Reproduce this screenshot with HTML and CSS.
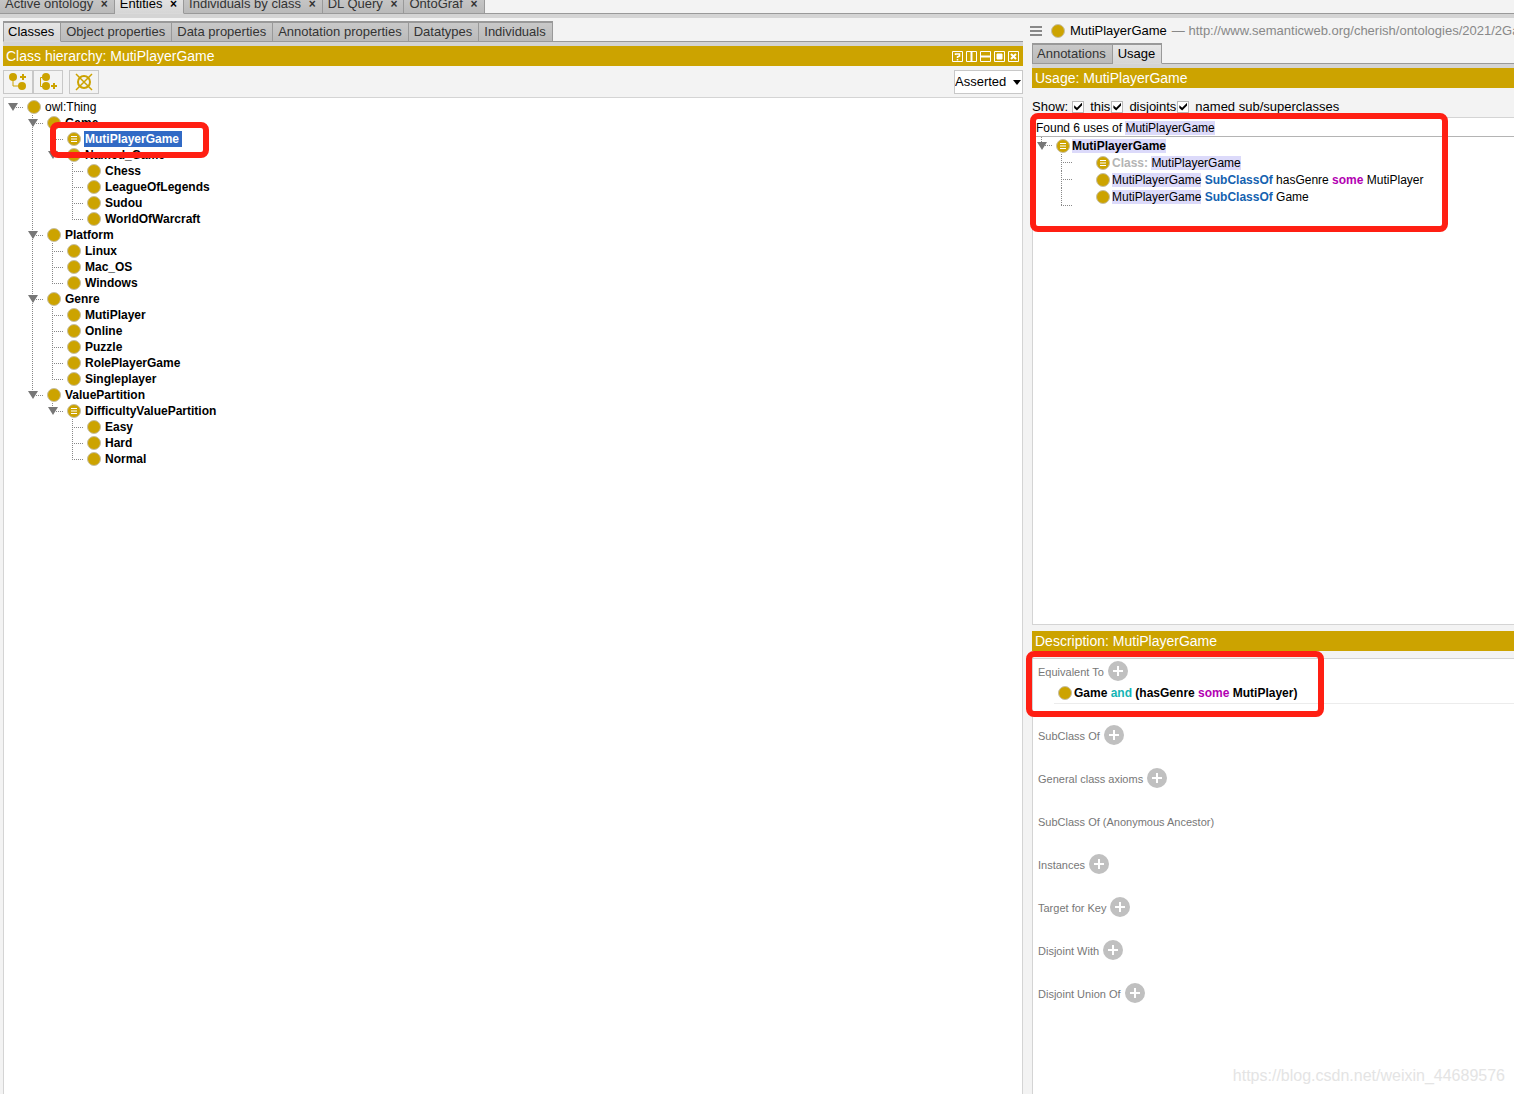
FILE: index.html
```
<!DOCTYPE html>
<html lang="en">
<head>
<meta charset="utf-8">
<title>MutiPlayerGame - Entities</title>
<meta name="viewport" content="width=device-width, initial-scale=1">
<link rel="stylesheet" href="styles.css">
</head>
<body>
<svg class="sprite" aria-hidden="true">
  <symbol id="class" viewBox="0 0 14 14"><circle cx="7" cy="7" r="6.5" fill="#cca300" stroke="#c6bea4"/></symbol>
  <symbol id="defined" viewBox="0 0 14 14"><circle cx="7" cy="7" r="6.5" fill="#cca300" stroke="#c6bea4"/><path d="M4 4.5h6M4 7h6M4 9.5h6" stroke="#fff"/></symbol>
  <symbol id="arrow" viewBox="0 0 10 8"><path d="M0 0h10L5 8z" fill="#777"/></symbol>
  <symbol id="plus" viewBox="0 0 20 20"><circle cx="10" cy="10" r="10" fill="#c0c0c0"/><path d="M10 5v10M5 10h10" stroke="#fff" stroke-width="2"/></symbol>
</svg>

<nav class="tabs main-tabs">
  <button class="tab">Active ontology <span class="close">×</span></button>
  <button class="tab selected">Entities <span class="close">×</span></button>
  <button class="tab">Individuals by class <span class="close">×</span></button>
  <button class="tab">DL Query <span class="close">×</span></button>
  <button class="tab">OntoGraf <span class="close">×</span></button>
</nav>

<main class="workspace">
  <section class="hierarchy">
    <nav class="tabs sub-tabs">
      <button class="tab selected">Classes</button>
      <button class="tab">Object properties</button>
      <button class="tab">Data properties</button>
      <button class="tab">Annotation properties</button>
      <button class="tab">Datatypes</button>
      <button class="tab">Individuals</button>
    </nav>
    <header class="view-title">
      <h2>Class hierarchy: MutiPlayerGame</h2>
      <div class="view-actions">
        <button aria-label="Help"><svg viewBox="0 0 11 11"><path d="M.5.5h10v10H.5z"/><path d="M3.5 4V3h4v2L5.500 6v1M5.500 8v1.500" stroke-width="1.500"/></svg></button>
        <button aria-label="Split vertically"><svg viewBox="0 0 11 11"><path d="M.5.5h10v10H.5z"/><path d="M5.500 0v11" stroke-width="2"/></svg></button>
        <button aria-label="Split horizontally"><svg viewBox="0 0 11 11"><path d="M.5.5h10v10H.5z"/><path d="M0 5.500h11" stroke-width="2"/></svg></button>
        <button aria-label="Float"><svg viewBox="0 0 11 11"><path d="M.5.5h10v10H.5z"/><path d="M3 3h5v5H3z" fill="#fff"/></svg></button>
        <button aria-label="Close"><svg viewBox="0 0 11 11"><path d="M.5.5h10v10H.5z"/><path d="M3 3l5 5M8 3l-5 5" stroke-width="2"/></svg></button>
      </div>
    </header>
    <div class="toolbar">
      <button class="tool" aria-label="Add subclass"><svg viewBox="0 0 20 20"><path d="M5 5v9h9" fill="none" stroke="#cca300"/><circle cx="5" cy="5" r="4" fill="#cca300"/><circle cx="14" cy="14" r="4" fill="#cca300"/><path d="M15 2v6M12 5h6" stroke="#cca300" stroke-width="2"/></svg></button>
      <button class="tool" aria-label="Add sibling class"><svg viewBox="0 0 20 20"><path d="M7 5.500H2.500v9H7" fill="none" stroke="#cca300"/><circle cx="8" cy="5" r="4" fill="#cca300"/><circle cx="8" cy="14" r="4" fill="#cca300"/><path d="M16 11v6M13 14h6" stroke="#cca300" stroke-width="2"/></svg></button>
      <button class="tool separate" aria-label="Delete class"><svg viewBox="0 0 20 20"><circle cx="10" cy="10" r="6" fill="none" stroke="#cca300" stroke-width="2"/><path d="M2 2l16 16M18 2L2 18" stroke="#cca300" stroke-width="1.500"/></svg></button>
      <div class="mode">
        <select aria-label="Hierarchy mode"><option>Asserted</option><option>Inferred</option></select>
        <svg viewBox="0 0 8 5" aria-hidden="true"><path d="M0 0h8L4 5z"/></svg>
      </div>
    </div>
    <div class="tree-view">
      <ul class="tree">
        <li><div class="row"><button class="toggle" aria-label="Collapse"><svg><use href="#arrow"/></svg></button><svg class="dot"><use href="#class"/></svg><span class="plain">owl:Thing</span></div>
          <ul>
            <li><div class="row"><button class="toggle" aria-label="Collapse"><svg><use href="#arrow"/></svg></button><svg class="dot"><use href="#class"/></svg><span>Game</span></div>
              <ul>
                <li class="marked"><div class="row"><i class="toggle"></i><svg class="dot"><use href="#defined"/></svg><span class="current">MutiPlayerGame</span></div><div class="callout"></div></li>
                <li><div class="row"><button class="toggle" aria-label="Collapse"><svg><use href="#arrow"/></svg></button><svg class="dot"><use href="#class"/></svg><span>Named_Game</span></div>
                  <ul>
                    <li><div class="row"><i class="toggle"></i><svg class="dot"><use href="#class"/></svg><span>Chess</span></div></li>
                    <li><div class="row"><i class="toggle"></i><svg class="dot"><use href="#class"/></svg><span>LeagueOfLegends</span></div></li>
                    <li><div class="row"><i class="toggle"></i><svg class="dot"><use href="#class"/></svg><span>Sudou</span></div></li>
                    <li><div class="row"><i class="toggle"></i><svg class="dot"><use href="#class"/></svg><span>WorldOfWarcraft</span></div></li>
                  </ul>
                </li>
              </ul>
            </li>
            <li><div class="row"><button class="toggle" aria-label="Collapse"><svg><use href="#arrow"/></svg></button><svg class="dot"><use href="#class"/></svg><span>Platform</span></div>
              <ul>
                <li><div class="row"><i class="toggle"></i><svg class="dot"><use href="#class"/></svg><span>Linux</span></div></li>
                <li><div class="row"><i class="toggle"></i><svg class="dot"><use href="#class"/></svg><span>Mac_OS</span></div></li>
                <li><div class="row"><i class="toggle"></i><svg class="dot"><use href="#class"/></svg><span>Windows</span></div></li>
              </ul>
            </li>
            <li><div class="row"><button class="toggle" aria-label="Collapse"><svg><use href="#arrow"/></svg></button><svg class="dot"><use href="#class"/></svg><span>Genre</span></div>
              <ul>
                <li><div class="row"><i class="toggle"></i><svg class="dot"><use href="#class"/></svg><span>MutiPlayer</span></div></li>
                <li><div class="row"><i class="toggle"></i><svg class="dot"><use href="#class"/></svg><span>Online</span></div></li>
                <li><div class="row"><i class="toggle"></i><svg class="dot"><use href="#class"/></svg><span>Puzzle</span></div></li>
                <li><div class="row"><i class="toggle"></i><svg class="dot"><use href="#class"/></svg><span>RolePlayerGame</span></div></li>
                <li><div class="row"><i class="toggle"></i><svg class="dot"><use href="#class"/></svg><span>Singleplayer</span></div></li>
              </ul>
            </li>
            <li><div class="row"><button class="toggle" aria-label="Collapse"><svg><use href="#arrow"/></svg></button><svg class="dot"><use href="#class"/></svg><span>ValuePartition</span></div>
              <ul>
                <li><div class="row"><button class="toggle" aria-label="Collapse"><svg><use href="#arrow"/></svg></button><svg class="dot"><use href="#defined"/></svg><span>DifficultyValuePartition</span></div>
                  <ul>
                    <li><div class="row"><i class="toggle"></i><svg class="dot"><use href="#class"/></svg><span>Easy</span></div></li>
                    <li><div class="row"><i class="toggle"></i><svg class="dot"><use href="#class"/></svg><span>Hard</span></div></li>
                    <li><div class="row"><i class="toggle"></i><svg class="dot"><use href="#class"/></svg><span>Normal</span></div></li>
                  </ul>
                </li>
              </ul>
            </li>
          </ul>
        </li>
      </ul>
    </div>
  </section>

  <section class="entity">
    <header class="entity-head">
      <button class="menu" aria-label="Menu"><svg viewBox="0 0 12 10"><path d="M0 1h12M0 5h12M0 9h12" stroke="#888" stroke-width="2"/></svg></button>
      <svg class="dot"><use href="#class"/></svg>
      <h1>MutiPlayerGame</h1>
      <span class="iri">— http://www.semanticweb.org/cherish/ontologies/2021/2Game#MutiPlayerGame</span>
    </header>

    <div class="usage">
      <nav class="tabs sub-tabs">
        <button class="tab">Annotations</button>
        <button class="tab selected">Usage</button>
      </nav>
      <header class="view-title"><h2>Usage: MutiPlayerGame</h2></header>
      <div class="filters">
        <span>Show:</span>
        <label><input type="checkbox" checked>this</label>
        <label><input type="checkbox" checked>disjoints</label>
        <label><input type="checkbox" checked>named sub/superclasses</label>
      </div>
      <div class="usage-list">
        <p class="found">Found 6 uses of <mark>MutiPlayerGame</mark></p>
        <ul class="tree usage-tree">
          <li><div class="row"><button class="toggle" aria-label="Collapse"><svg><use href="#arrow"/></svg></button><svg class="dot"><use href="#defined"/></svg><b><mark>MutiPlayerGame</mark></b></div>
            <ul>
              <li><div class="row"><svg class="dot"><use href="#defined"/></svg><span><b class="kind">Class:</b> <mark>MutiPlayerGame</mark></span></div></li>
              <li><div class="row"><svg class="dot"><use href="#class"/></svg><span><mark>MutiPlayerGame</mark> <b class="axiom">SubClassOf</b> hasGenre <b class="some">some</b> MutiPlayer</span></div></li>
              <li><div class="row"><svg class="dot"><use href="#class"/></svg><span><mark>MutiPlayerGame</mark> <b class="axiom">SubClassOf</b> Game</span></div></li>
            </ul>
          </li>
        </ul>
        <div class="callout"></div>
      </div>
    </div>

    <div class="description">
      <header class="view-title"><h2>Description: MutiPlayerGame</h2></header>
      <div class="sections">
        <div class="section"><h3>Equivalent To</h3><button class="add" aria-label="Add equivalent class"><svg><use href="#plus"/></svg></button></div>
        <div class="expression"><svg class="dot"><use href="#class"/></svg><span>Game <b class="and">and</b> (hasGenre <b class="some">some</b> MutiPlayer)</span></div>
        <div class="section"><h3>SubClass Of</h3><button class="add" aria-label="Add superclass"><svg><use href="#plus"/></svg></button></div>
        <div class="section"><h3>General class axioms</h3><button class="add" aria-label="Add general axiom"><svg><use href="#plus"/></svg></button></div>
        <div class="section"><h3>SubClass Of (Anonymous Ancestor)</h3></div>
        <div class="section"><h3>Instances</h3><button class="add" aria-label="Add instance"><svg><use href="#plus"/></svg></button></div>
        <div class="section"><h3>Target for Key</h3><button class="add" aria-label="Add key"><svg><use href="#plus"/></svg></button></div>
        <div class="section"><h3>Disjoint With</h3><button class="add" aria-label="Add disjoint class"><svg><use href="#plus"/></svg></button></div>
        <div class="section"><h3>Disjoint Union Of</h3><button class="add" aria-label="Add disjoint union"><svg><use href="#plus"/></svg></button></div>
        <div class="callout"></div>
      </div>
    </div>
  </section>
</main>
<div class="watermark">https://blog.csdn.net/weixin_44689576</div>
</body>
</html>
```
FILE: styles.css
```
* { box-sizing: border-box; }
body {
  margin: 0;
  height: 100vh;
  display: flex;
  flex-direction: column;
  overflow: hidden;
  background: #f3f3f3;
  color: #000;
  font: 12px/16px "Liberation Sans", Arial, sans-serif;
}
button { margin: 0; padding: 0; border: 0; background: none; font: inherit; color: inherit; }
h1, h2, h3, p, ul { margin: 0; padding: 0; font-size: inherit; font-weight: normal; }
ul { list-style: none; }
svg { display: block; }
mark { background: #dcdafa; color: inherit; }
.sprite { display: none; }
.dot { width: 14px; height: 14px; flex: none; }

/* Tabs */
.tabs { display: flex; flex: none; height: 25px; border-bottom: 4px solid #d4d4d4; box-shadow: inset 0 -1px #999; }
.tab {
  height: 21px;
  padding: 0 6px 0 5px;
  border: solid #999;
  border-width: 2px 1px 1px;
  border-left-width: 0;
  background: linear-gradient(#c9c9c9, #bababa);
  color: #333;
  font-size: 13px;
  line-height: 18px;
  white-space: nowrap;
}
.tab.selected { border-bottom-color: #d9d9d9; background: linear-gradient(#e6e6e6, #d6d6d6); color: #000; }
.sub-tabs .tab:first-child { border-left-width: 1px; padding-left: 4px; }
.main-tabs { height: 18px; align-items: flex-end; }
.close { padding-left: 4px; font-weight: bold; font-size: 12px; }

/* Two columns */
.workspace { flex: 1; min-height: 0; display: grid; grid-template-columns: minmax(0, 1fr) 482px; gap: 9px; padding-left: 3px; }
.hierarchy { display: flex; flex-direction: column; min-height: 0; padding-top: 3px; }
.view-title {
  display: flex;
  flex: none;
  align-items: center;
  justify-content: space-between;
  height: 20px;
  padding: 0 4px 0 3px;
  background: #cca300;
  color: #fff;
  font-size: 14px;
}
.view-actions { display: flex; gap: 3px; }
.view-actions svg { width: 11px; height: 11px; fill: none; stroke: #fff; }

.toolbar { display: flex; flex: none; padding: 4px 0 3px; }
.tool { display: grid; place-items: center; width: 30px; height: 24px; border: 1px solid #c8c8c8; }
.tool svg { width: 20px; height: 20px; }
.separate { margin-left: 6px; }
.mode { display: grid; align-items: center; width: 69px; margin-left: auto; }
.mode > * { grid-area: 1 / 1; }
.mode select { width: 100%; height: 24px; margin: 0; padding: 0; border: 1px solid #c8c8c8; border-radius: 0; background: #fff; color: #000; font: inherit; font-size: 13px; appearance: none; }
.mode svg { width: 8px; height: 5px; margin-right: 2px; justify-self: end; pointer-events: none; }

/* Trees, with dotted connectors */
.tree-view { flex: 1; min-height: 0; padding: 1px 4px; border: 1px solid #d4d4d4; border-bottom: 0; background: #fff; }
.tree ul { margin-left: 20px; }
.tree li {
  background-image:
    repeating-linear-gradient(to bottom, #888 0 1px, transparent 1px 2px),
    repeating-linear-gradient(to right, #888 0 1px, transparent 1px 2px);
  background-position: 4px 0, 4px 8px;
  background-size: 1px 100%, 12px 1px;
  background-repeat: no-repeat;
}
.tree li:last-child { background-size: 1px 8px, 12px 1px; }
.tree-view > .tree > li { background-size: 0 0, 12px 1px; }
.row { display: flex; align-items: center; height: 16px; white-space: nowrap; font-weight: bold; }
.row .dot { margin: 0 3px 0 9px; }
.row span { padding: 1px 0 0 1px; line-height: 15px; }
.row .plain { font-weight: normal; }
.row .current { padding-right: 3px; background: #316ac5; color: #fff; }
.toggle { width: 10px; height: 8px; }
.toggle svg { width: 10px; height: 8px; }

.callout { position: absolute; border: 6px solid #ff1f13; border-radius: 8px; pointer-events: none; z-index: 1; }
.marked { position: relative; }
.marked .callout { top: -9px; left: 2px; width: 159px; height: 36px; }

/* Entity column */
.entity { display: grid; grid-template-rows: 25px minmax(0, 582fr) minmax(0, 469fr); min-height: 0; min-width: 0; }
.entity-head { display: flex; align-items: center; gap: 5px; margin-left: -2px; font-size: 13px; white-space: nowrap; overflow: hidden; }
.entity-head .dot { margin-left: 4px; }
.menu svg { width: 12px; height: 10px; }
.iri { color: #888; }
.usage, .description { display: flex; flex-direction: column; min-height: 0; }
.description { padding-top: 6px; }

.filters { display: flex; flex: none; align-items: center; gap: 1px; height: 29px; padding-top: 8px; font-size: 13px; white-space: nowrap; }
.filters span { margin-right: 3px; }
.filters label { display: flex; align-items: center; gap: 6px; }
.filters input { display: grid; place-items: center; width: 12px; height: 12px; margin: 0; border: 1px solid #b8b8b8; background: #fff; appearance: none; }
.filters input:checked::before { content: ""; width: 8px; height: 8px; background: #000; clip-path: polygon(0 35%, 35% 65%, 100% 0, 100% 35%, 35% 100%, 0 70%); }

.usage-list { position: relative; flex: 1; border: 1px solid #d4d4d4; border-right: 0; background: #fff; }
.found { height: 19px; padding: 3px 3px 0; line-height: 15px; border-bottom: 1px solid #b4b4b4; }
.usage-tree { padding-left: 4px; }
.usage-tree .row { height: 17px; font-weight: normal; }
.usage-tree .row .dot { margin-right: 2px; }
.usage-tree .row span { padding-left: 0; }
.usage-tree ul .dot { margin-left: 39px; }
.usage-tree ul li:last-child { height: 34px; background-position: 4px 0, 4px 17px; background-size: 1px 17px, 12px 1px; }
.usage-list .callout { top: -5px; left: -3px; width: 418px; height: 119px; }
.kind { color: #b4b4b4; }
.axiom { color: #1462b0; }
.some { color: #b200b2; }
.and { color: #14b4b4; }

.sections { position: relative; flex: 1; min-height: 0; margin-top: 7px; padding-top: 2px; border: solid #d4d4d4; border-width: 1px 0 0 1px; background: #fff; }
.section { display: flex; align-items: center; gap: 4px; height: 20px; margin-bottom: 23px; padding-left: 5px; color: #777; font-size: 11px; }
.section h3 { padding-top: 1px; }
.section:first-child { margin-bottom: 2px; }
.add, .add svg { width: 20px; height: 20px; }
.expression { display: flex; align-items: center; gap: 2px; height: 21px; margin: 0 0 21px 21px; padding-left: 4px; border-bottom: 1px solid #ececec; font-weight: bold; }
.sections .callout { top: -8px; left: -7px; width: 298px; height: 66px; }

.watermark { position: absolute; right: 9px; bottom: 8px; color: #e4e4e4; font-size: 16px; line-height: 20px; }
```
